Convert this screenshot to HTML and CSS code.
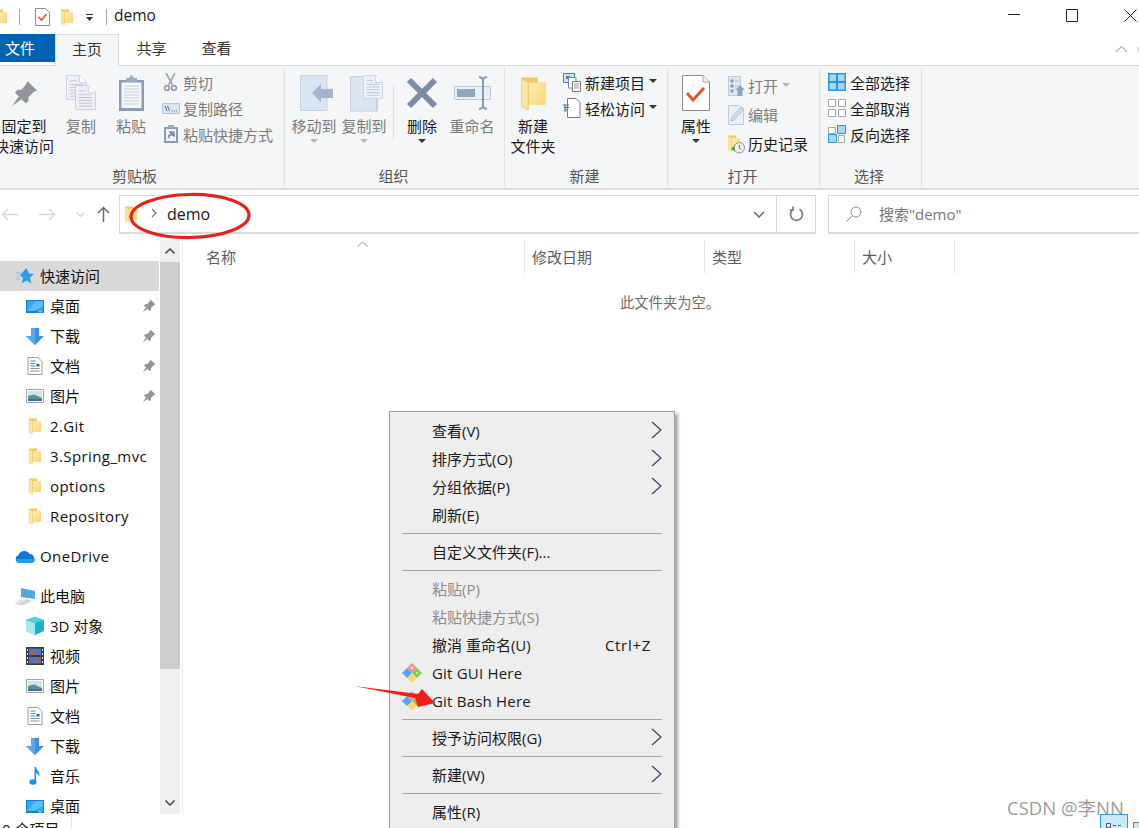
FILE: index.html
```html
<!DOCTYPE html>
<html lang="zh-CN">
<head>
    <meta charset="UTF-8">
    <title>demo</title>
    <link rel="stylesheet" href="styles.css">
</head>
<body>
<svg class="sprite" xmlns="http://www.w3.org/2000/svg">
    <defs>
        <linearGradient id="folderFront" x1="0" y1="0" x2="1" y2="1">
            <stop offset="0" stop-color="#fdeeb8"/>
            <stop offset="1" stop-color="#fbd56f"/>
        </linearGradient>
        <symbol id="folder" viewBox="0 0 12 16">
            <path d="M0 0.5H8V3H12V13.5H0Z" fill="#f3c95f"/>
            <path d="M3.5 3H12V13.5H3.5Z" fill="url(#folderFront)"/>
            <path d="M0 1L3.5 3V16L0 14.5Z" fill="#fbe6a4" stroke="#e8c063" stroke-width=".4"/>
        </symbol>
        <symbol id="pin" viewBox="0 0 14 14">
            <path d="M8.5 .5L13.5 5.5L12 6L9 9V11L7.5 12L2 6.5L3.5 5H5.5L8 2Z" fill="#8f969c"/>
            <path d="M4 8.5L.5 13.5L5.5 10Z" fill="#8f969c"/>
        </symbol>
        <symbol id="desktop" viewBox="0 0 18 13">
            <path d="M0 0H18V13H0Z" fill="#0f7fd8"/>
            <path d="M1 1H17V11H1Z" fill="#36a6f2"/>
            <path d="M1 11L10 1H17V6L8 11Z" fill="#5cbcf8"/>
            <path d="M12 11.5H16V12.2H12Z" fill="#fff"/>
        </symbol>
        <symbol id="download" viewBox="0 0 18 17">
            <path d="M5 0H13V8H18L9 17L0 8H5Z" fill="#3d8fe0"/>
            <path d="M5 0H9V17L0 8H5Z" fill="#5aa7ec"/>
        </symbol>
        <symbol id="document" viewBox="0 0 15 18">
            <path d="M.5 .5H10.5L14.5 4.5V17.5H.5Z" fill="#fff" stroke="#9a9a9a"/>
            <path d="M3 4H8M3 6.5H8M3 9H8" stroke="#2e8ee0" stroke-width="1.2"/>
            <path d="M3 11.5H12M3 14H12" stroke="#8f8f8f"/>
            <path d="M9 7H12V9.5H9Z" fill="#2f6a8c"/>
        </symbol>
        <symbol id="picture" viewBox="0 0 18 14">
            <path d="M.5 .5H17.5V13.5H.5Z" fill="#fff" stroke="#a5a5a5"/>
            <path d="M2 2H16V12H2Z" fill="#cfe4ee"/>
            <path d="M2 7L8 5.5L16 9V12H2Z" fill="#5f8f8a"/>
            <path d="M2 10H16V12H2Z" fill="#2f75b5"/>
        </symbol>
        <symbol id="gitlogo" viewBox="0 0 20 20">
            <path d="M10 0L15 5L10 10L5 5Z" fill="#f78f8f"/>
            <path d="M8.5 3.5H11.5V6H8.5Z" fill="#fff" opacity=".5"/>
            <path d="M15 5L20 10L15 15L10 10Z" fill="#7fcf55"/>
            <path d="M14 9H16V11H14Z" fill="#fff" opacity=".5"/>
            <path d="M10 10L15 15L10 20L5 15Z" fill="#f9da72"/>
            <path d="M5 5L10 10L5 15L0 10Z" fill="#5aa2f2"/>
        </symbol>
        <symbol id="chevron" viewBox="0 0 11 18">
            <path d="M1 1L10 9L1 17" fill="none" stroke="#39415a" stroke-width="1.2"/>
        </symbol>
        <symbol id="page" viewBox="0 0 22 26">
            <path d="M.5 .5H14L21.5 8V25.5H.5Z" fill="#eef2f8" stroke="#c3d0e4"/>
            <path d="M14 .5V8H21.5" fill="#fff" stroke="#c3d0e4"/>
            <path d="M4 6H11M4 10H18M4 13H18M4 16H18M4 19H18M4 22H18" stroke="#b9c4d6"/>
        </symbol>
    </defs>
</svg>

<div class="window">
    <div class="titlebar">
        <svg class="qa-folder-cut" width="12" height="16"><use href="#folder"/></svg>
        <span class="qa-sep qa-sep-first"></span>
        <svg class="qa-props" width="15" height="18" viewBox="0 0 15 18">
            <path d="M.5 .5H10.5L14.5 4.5V17.5H.5Z" fill="#fff" stroke="#8c8c8c"/>
            <path d="M3.5 9L6.5 12L11.5 6" fill="none" stroke="#e2562a" stroke-width="1.6"/>
        </svg>
        <svg class="qa-folder" width="12" height="16"><use href="#folder"/></svg>
        <svg class="qa-drop" width="9" height="8" viewBox="0 0 9 8">
            <path d="M1 .5H8" stroke="#333"/>
            <path d="M1 3H8L4.5 7Z" fill="#333"/>
        </svg>
        <span class="qa-sep qa-sep-second"></span>
        <span class="title-text">demo</span>
        <div class="win-buttons">
            <svg width="12" height="12" viewBox="0 0 12 12"><path d="M0 5.5H12" stroke="#222"/></svg>
            <svg width="12" height="13" viewBox="0 0 12 13"><path d="M.5 .5H11.5V12.5H.5Z" fill="none" stroke="#222"/></svg>
            <svg width="13" height="13" viewBox="0 0 13 13"><path d="M.5 .5L12.5 12.5M12.5 .5L.5 12.5" stroke="#222"/></svg>
        </div>
    </div>

    <div class="tabs">
        <div class="tab tab-file">文件</div>
        <div class="tab tab-active">主页</div>
        <div class="tab tab-share">共享</div>
        <div class="tab tab-view">查看</div>
        <div class="ribbon-tools">
            <svg width="13" height="8" viewBox="0 0 13 8"><path d="M1 7L6.5 1.5L12 7" fill="none" stroke="#b5b5b5" stroke-width="1.2"/></svg>
            <svg width="14" height="14" viewBox="0 0 14 14"><circle cx="7" cy="7" r="6.5" fill="#0a6cc4"/></svg>
        </div>
    </div>

    <div class="ribbon">
        <section class="group group-clipboard">
            <div class="group-body">
                <div class="big-btn btn-pin">
                    <div class="big-icon"><svg width="27" height="27"><use href="#pin"/></svg></div>
                    <div class="btn-label">固定到<br>快速访问</div>
                </div>
                <div class="big-btn btn-copy muted">
                    <div class="big-icon">
                        <svg width="31" height="36" viewBox="0 0 31 36">
                            <use href="#page" x="0" y="0" width="21" height="25"/>
                            <use href="#page" x="9" y="10" width="21" height="25"/>
                        </svg>
                    </div>
                    <div class="btn-label">复制</div>
                </div>
                <div class="big-btn btn-paste muted">
                    <div class="big-icon">
                        <svg width="27" height="37" viewBox="0 0 27 37">
                            <path d="M1 5H26V36H1Z" fill="#8a9cb8"/>
                            <path d="M3.5 7.5H23.5V33H3.5Z" fill="#f4f7fb"/>
                            <path d="M6 11H21M6 14H21M6 17H21M6 20H21M6 23H21M6 26H21M6 29H21" stroke="#c3cfe0"/>
                            <path d="M8 3H11L13.5 0L16 3H19V7H8Z" fill="#9aabc4"/>
                        </svg>
                    </div>
                    <div class="btn-label">粘贴</div>
                </div>
                <div class="small-col small-col-clip muted">
                    <div class="small-btn">
                        <span class="slot">
                            <svg width="13" height="19" viewBox="0 0 13 19">
                                <path d="M2 0L8.5 12M11 0L4.5 12" stroke="#98a6ba" stroke-width="1.6"/>
                                <circle cx="3" cy="15" r="2.4" fill="none" stroke="#7e8da6" stroke-width="1.4"/>
                                <circle cx="10" cy="15" r="2.4" fill="none" stroke="#7e8da6" stroke-width="1.4"/>
                            </svg>
                        </span>
                        <span>剪切</span>
                    </div>
                    <div class="small-btn">
                        <span class="slot">
                            <svg width="18" height="11" viewBox="0 0 18 11">
                                <path d="M.5 .5H17.5V10.5H.5Z" fill="#dbe4f1" stroke="#b6c4d8"/>
                                <path d="M3 3L5 8M5.5 3L7.5 8" stroke="#5a6b85"/>
                                <path d="M10 8H11M12 8H13M14 8H15" stroke="#5a6b85"/>
                            </svg>
                        </span>
                        <span>复制路径</span>
                    </div>
                    <div class="small-btn">
                        <span class="slot">
                            <svg width="14" height="18" viewBox="0 0 14 18">
                                <path d="M0 2H14V18H0Z" fill="#8a9cb8"/>
                                <path d="M2 4H12V16H2Z" fill="#f0f3f8"/>
                                <path d="M4 0H10V3H4Z" fill="#9aabc4"/>
                                <path d="M5 13V10H8M6 7H10V11Z" fill="none" stroke="#54688a" stroke-width="1.2"/>
                            </svg>
                        </span>
                        <span>粘贴快捷方式</span>
                    </div>
                </div>
            </div>
            <div class="group-label">剪贴板</div>
        </section>

        <section class="group group-organize">
            <div class="group-body">
                <div class="big-btn btn-50 muted">
                    <div class="big-icon icon-nudge">
                        <svg width="33" height="36" viewBox="0 0 33 36">
                            <path d="M.5 .5H27V35.5H.5Z" fill="#dbe4f1" stroke="#c6d2e4"/>
                            <path d="M12 18L21 9V14H33V23H21V27Z" fill="#a3b4cc"/>
                        </svg>
                    </div>
                    <div class="btn-label">移动到<i class="caret caret-light"></i></div>
                </div>
                <div class="big-btn btn-50 muted">
                    <div class="big-icon icon-nudge">
                        <svg width="33" height="37" viewBox="0 0 33 37">
                            <path d="M.5 1.5H27V36H.5Z" fill="#dbe4f1" stroke="#c6d2e4"/>
                            <use href="#page" x="13" y="0" width="20" height="24"/>
                            <path d="M27 24V36" stroke="#b9c7da"/>
                        </svg>
                    </div>
                    <div class="btn-label">复制到<i class="caret caret-light"></i></div>
                </div>
                <div class="group-divider"></div>
                <div class="big-btn btn-50">
                    <div class="big-icon">
                        <svg width="32" height="32" viewBox="0 0 32 32">
                            <path d="M3 3L29 29M29 3L3 29" stroke="#7d8ba4" stroke-width="6"/>
                        </svg>
                    </div>
                    <div class="btn-label">删除<i class="caret"></i></div>
                </div>
                <div class="big-btn btn-50 muted">
                    <div class="big-icon">
                        <svg width="37" height="34" viewBox="0 0 37 34">
                            <path d="M.5 10.5H36.5V23.5H.5Z" fill="#eaf0f7" stroke="#b9c7da"/>
                            <path d="M3 13H21V21H3Z" fill="#93a6c0"/>
                            <path d="M25 1C27 1 28 2 29 3C30 2 31 1 33 1M29 3V31M25 33C27 33 28 32 29 31C30 32 31 33 33 33" fill="none" stroke="#8b9cb6" stroke-width="2"/>
                        </svg>
                    </div>
                    <div class="btn-label">重命名</div>
                </div>
            </div>
            <div class="group-label">组织</div>
        </section>

        <section class="group group-new">
            <div class="group-body">
                <div class="big-btn btn-folder">
                    <div class="big-icon"><svg width="25" height="34"><use href="#folder"/></svg></div>
                    <div class="btn-label">新建<br>文件夹</div>
                </div>
                <div class="small-col small-col-new">
                    <div class="small-btn">
                        <svg width="18" height="19" viewBox="0 0 18 19">
                            <path d="M.5 .5H11.5V9.5H.5Z" fill="#cfe3f6" stroke="#3e87c7"/>
                            <path d="M3 3H7V6H3Z" fill="#3e87c7"/>
                            <path d="M5.5 4.5H13V15H5.5Z" fill="#fff" stroke="#888"/>
                            <path d="M9.5 8.5H17.5V18.5H9.5Z" fill="#fff" stroke="#777"/>
                            <path d="M11 11H16M11 13H16M11 15H16" stroke="#999"/>
                        </svg>
                        <span>新建项目</span><i class="caret caret-side"></i>
                    </div>
                    <div class="small-btn">
                        <svg width="18" height="20" viewBox="0 0 18 20">
                            <path d="M4.5 .5H13L17 4.5V19.5H4.5Z" fill="#fff" stroke="#7d7d7d"/>
                            <path d="M0 7H6M1 9.5H6M2 12H4M2 7V14" stroke="#2e6fb0"/>
                        </svg>
                        <span>轻松访问</span><i class="caret caret-side"></i>
                    </div>
                </div>
            </div>
            <div class="group-label">新建</div>
        </section>

        <section class="group group-open">
            <div class="group-body">
                <div class="big-btn btn-props">
                    <div class="big-icon">
                        <svg width="28" height="36" viewBox="0 0 28 36">
                            <path d="M.5 .5H21L27.5 7V35.5H.5Z" fill="#fff" stroke="#8c8c8c"/>
                            <path d="M21 .5V7H27.5" fill="#eee" stroke="#aaa"/>
                            <path d="M5 18L11 25L22 13" fill="none" stroke="#e2562a" stroke-width="3"/>
                        </svg>
                    </div>
                    <div class="btn-label">属性<i class="caret"></i></div>
                </div>
                <div class="small-col small-col-open">
                    <div class="small-btn muted">
                        <svg width="17" height="20" viewBox="0 0 17 20">
                            <path d="M.5 .5H12.5V19.5H.5Z" fill="#dfe7f2" stroke="#bccadd"/>
                            <path d="M2.5 3.5H5.5V6.5H2.5ZM2.5 8.5H5.5V11.5H2.5ZM2.5 13.5H5.5V16.5H2.5Z" fill="#8a9ab2"/>
                            <path d="M7 5H11M7 10H10" stroke="#b2bfd2"/>
                            <path d="M12 9L17 14H14.5V20H9.5V14H7Z" fill="#8ea6c6"/>
                        </svg>
                        <span>打开</span><i class="caret caret-side caret-light"></i>
                    </div>
                    <div class="small-btn muted">
                        <svg width="17" height="20" viewBox="0 0 17 20">
                            <path d="M.5 .5H11L15.5 5V19.5H.5Z" fill="#eaf0f7" stroke="#bccadd"/>
                            <path d="M3 16L4 12L13 2L16 4L6 15Z" fill="#cfdcec" stroke="#a5b6cd" stroke-width=".8"/>
                        </svg>
                        <span>编辑</span>
                    </div>
                    <div class="small-btn">
                        <svg width="17" height="20" viewBox="0 0 18 20">
                            <use href="#folder" x="0" y="0" width="13" height="18"/>
                            <circle cx="12" cy="14" r="5.5" fill="#f2f2f2" stroke="#888"/>
                            <path d="M12 11V14L14 16" fill="none" stroke="#555"/>
                            <path d="M3 15L7 12V18Z" fill="#3aa63a"/>
                        </svg>
                        <span>历史记录</span>
                    </div>
                </div>
            </div>
            <div class="group-label">打开</div>
        </section>

        <section class="group group-select">
            <div class="group-body">
                <div class="small-col small-col-select">
                    <div class="small-btn">
                        <svg width="18" height="18" viewBox="0 0 18 18">
                            <path d="M0 0H18V18H0Z" fill="#2f94e0"/>
                            <path d="M1.5 1.5H8V8H1.5ZM10 1.5H16.5V8H10ZM1.5 10H8V16.5H1.5ZM10 10H16.5V16.5H10Z" fill="#a8d4f5"/>
                        </svg>
                        <span>全部选择</span>
                    </div>
                    <div class="small-btn">
                        <svg width="18" height="18" viewBox="0 0 18 18">
                            <path d="M.5 .5H7.5V7.5H.5ZM10.5 .5H17.5V7.5H10.5ZM.5 10.5H7.5V17.5H.5ZM10.5 10.5H17.5V17.5H10.5Z" fill="#fff" stroke="#a8a8a8"/>
                        </svg>
                        <span>全部取消</span>
                    </div>
                    <div class="small-btn">
                        <svg width="18" height="18" viewBox="0 0 18 18">
                            <path d="M.5 2.5H7.5V8.5H.5ZM10.5 10.5H16.5V17.5H10.5Z" fill="#fff" stroke="#a8a8a8"/>
                            <path d="M9.5 .5H17.5V8.5H9.5ZM.5 9.5H8.5V17.5H.5Z" fill="#a8d4f5" stroke="#2f94e0"/>
                        </svg>
                        <span>反向选择</span>
                    </div>
                </div>
            </div>
            <div class="group-label">选择</div>
        </section>
    </div>

    <div class="navbar">
        <div class="nav-arrows">
            <svg width="17" height="13" viewBox="0 0 17 13"><path d="M17 6.5H1.5M7 1L1.5 6.5L7 12" fill="none" stroke="#d8d8d8" stroke-width="1.5"/></svg>
            <svg width="17" height="13" viewBox="0 0 17 13"><path d="M0 6.5H15.5M10 1L15.5 6.5L10 12" fill="none" stroke="#d8d8d8" stroke-width="1.5"/></svg>
            <svg width="9" height="6" viewBox="0 0 9 6"><path d="M.5 .5L4.5 4.5L8.5 .5" fill="none" stroke="#d8d8d8" stroke-width="1.3"/></svg>
            <svg width="13" height="16" viewBox="0 0 13 16"><path d="M6.5 16V1.5M1 7L6.5 1.5L12 7" fill="none" stroke="#6b6b6b" stroke-width="1.5"/></svg>
        </div>
        <div class="address">
            <svg class="address-folder" width="12" height="16"><use href="#folder"/></svg>
            <svg class="address-sep" width="6" height="10" viewBox="0 0 6 10"><path d="M1 1L5 5L1 9" fill="none" stroke="#777" stroke-width="1.3"/></svg>
            <span class="address-text">demo</span>
            <svg class="address-drop" width="12" height="7" viewBox="0 0 12 7"><path d="M1 1L6 6L11 1" fill="none" stroke="#666" stroke-width="1.5"/></svg>
            <div class="address-refresh">
                <svg width="15" height="16" viewBox="0 0 15 16"><path d="M10.5 3.2A6 6 0 1 1 4.5 3.2M4 .5V4H.8" fill="none" stroke="#777" stroke-width="1.7"/></svg>
            </div>
        </div>
        <div class="search">
            <svg width="16" height="16" viewBox="0 0 16 16"><circle cx="10" cy="6" r="5" fill="none" stroke="#888"/><path d="M6.5 9.5L.5 15.5" stroke="#888"/></svg>
            <span>搜索"demo"</span>
        </div>
    </div>

    <div class="main">
        <aside class="sidebar">
            <div class="tree">
                <div class="row row-top row-selected">
                    <svg class="row-icon" width="18" height="17" viewBox="0 0 18 17">
                        <path d="M10.5 0L12.8 5.4L18 6L14 9.8L15.2 15.5L10.5 12.6L5.8 15.5L7 9.8L4 7Z" fill="#2f9be8"/>
                        <path d="M0 5H5M1 8H5M0 11H4" stroke="#7dbdee"/>
                    </svg>
                    <span>快速访问</span>
                </div>
                <div class="row"><svg class="row-icon" width="18" height="13"><use href="#desktop"/></svg><span>桌面</span><svg class="row-pin" width="14" height="14"><use href="#pin"/></svg></div>
                <div class="row"><svg class="row-icon" width="18" height="17"><use href="#download"/></svg><span>下载</span><svg class="row-pin" width="14" height="14"><use href="#pin"/></svg></div>
                <div class="row"><svg class="row-icon" width="18" height="18"><use href="#document"/></svg><span>文档</span><svg class="row-pin" width="14" height="14"><use href="#pin"/></svg></div>
                <div class="row"><svg class="row-icon" width="18" height="14"><use href="#picture"/></svg><span>图片</span><svg class="row-pin" width="14" height="14"><use href="#pin"/></svg></div>
                <div class="row"><svg class="row-icon" width="18" height="16"><use href="#folder"/></svg><span class="en">2.Git</span></div>
                <div class="row"><svg class="row-icon" width="18" height="16"><use href="#folder"/></svg><span class="en">3.Spring_mvc</span></div>
                <div class="row"><svg class="row-icon" width="18" height="16"><use href="#folder"/></svg><span class="en">options</span></div>
                <div class="row"><svg class="row-icon" width="18" height="16"><use href="#folder"/></svg><span class="en">Repository</span></div>

                <div class="row row-top row-spaced">
                    <svg class="row-icon row-icon-wide" width="20" height="13" viewBox="0 0 20 13">
                        <path d="M4.5 13A4 4 0 0 1 3.5 5.2A6 6 0 0 1 14.5 4A4.6 4.6 0 0 1 16 13Z" fill="#0f78d4"/>
                        <path d="M4.5 13A4 4 0 0 1 1 9H20A4 4 0 0 1 16 13Z" fill="#2a9be6"/>
                    </svg>
                    <span class="en">OneDrive</span>
                </div>
                <div class="row row-top row-spaced">
                    <svg class="row-icon row-icon-wide" width="20" height="17" viewBox="0 0 20 17">
                        <path d="M6 0L20 3V11L6 9Z" fill="#58a6e0"/>
                        <path d="M5 14L12 11L17 13L9 17H2Z" fill="#d5d5d5"/>
                        <path d="M0 15L5 12L8 13L3 16Z" fill="#eee" stroke="#ccc" stroke-width=".5"/>
                    </svg>
                    <span>此电脑</span>
                </div>
                <div class="row">
                    <svg class="row-icon" width="18" height="18" viewBox="0 0 18 18">
                        <path d="M9 0L18 3V14L9 18L0 14V3Z" fill="#19b3cc"/>
                        <path d="M0 3L9 6V18L0 14Z" fill="#a5e8ee"/>
                        <path d="M9 0L18 3L9 6L0 3Z" fill="#54d2de"/>
                    </svg>
                    <span>3D 对象</span>
                </div>
                <div class="row">
                    <svg class="row-icon" width="18" height="18" viewBox="0 0 18 18">
                        <path d="M0 0H18V18H0Z" fill="#3a3a3a"/>
                        <path d="M3 1.5H15V8H3Z" fill="#4a78c0"/>
                        <path d="M3 10H15V16.5H3Z" fill="#4a78c0"/>
                        <path d="M5 4H9V8H5ZM9 12H13V16H9Z" fill="#c45b3c"/>
                        <path d="M1 2H2V4H1ZM1 6H2V8H1ZM1 10H2V12H1ZM1 14H2V16H1ZM16 2H17V4H16ZM16 6H17V8H16ZM16 10H17V12H16ZM16 14H17V16H16Z" fill="#ddd"/>
                    </svg>
                    <span>视频</span>
                </div>
                <div class="row"><svg class="row-icon" width="18" height="14"><use href="#picture"/></svg><span>图片</span></div>
                <div class="row"><svg class="row-icon" width="18" height="18"><use href="#document"/></svg><span>文档</span></div>
                <div class="row"><svg class="row-icon" width="18" height="17"><use href="#download"/></svg><span>下载</span></div>
                <div class="row">
                    <svg class="row-icon" width="18" height="18" viewBox="0 0 18 18">
                        <ellipse cx="7" cy="15" rx="3.6" ry="2.8" fill="#1c8fe6"/>
                        <path d="M8.5 0H10C10.5 4 15 5 13 10C12.5 7.5 11.5 6.5 10 6V15H8.5Z" fill="#1c8fe6"/>
                    </svg>
                    <span>音乐</span>
                </div>
                <div class="row"><svg class="row-icon" width="18" height="13"><use href="#desktop"/></svg><span>桌面</span></div>
            </div>
            <div class="scrollbar">
                <div class="scroll-btn">
                    <svg width="10" height="6" viewBox="0 0 10 6"><path d="M.5 5.5L5 1L9.5 5.5" fill="none" stroke="#555" stroke-width="1.6"/></svg>
                </div>
                <div class="scroll-thumb"></div>
                <div class="scroll-rest"></div>
                <div class="scroll-btn">
                    <svg width="10" height="6" viewBox="0 0 10 6"><path d="M.5 .5L5 5L9.5 .5" fill="none" stroke="#555" stroke-width="1.6"/></svg>
                </div>
            </div>
        </aside>

        <div class="content">
            <div class="col-header">
                <div class="col col-name">名称
                    <svg class="sort-caret" width="11" height="6" viewBox="0 0 11 6"><path d="M.5 5.5L5.5 1L10.5 5.5" fill="none" stroke="#999"/></svg>
                </div>
                <div class="col col-date">修改日期</div>
                <div class="col col-type">类型</div>
                <div class="col col-size">大小</div>
            </div>
            <div class="empty">此文件夹为空。</div>
        </div>
    </div>

    <div class="statusbar">
        <span class="status-count">0 个项目</span>
        <div class="view-buttons">
            <div class="view-btn view-btn-on">
                <svg width="16" height="8" viewBox="0 0 16 8"><path d="M.5 1.5H4.5V5.5H.5Z" fill="#fff" stroke="#555"/><path d="M7 3.5H10M12 3.5H15" stroke="#555"/></svg>
            </div>
            <svg class="view-thumb" width="12" height="8" viewBox="0 0 12 8"><path d="M.5 .5H11.5V7.5H.5Z" fill="#cfe3f6" stroke="#777"/></svg>
        </div>
    </div>

    <ul class="context-menu">
        <li class="menu-item">查看(V)<svg class="menu-arrow" width="11" height="18"><use href="#chevron"/></svg></li>
        <li class="menu-item">排序方式(O)<svg class="menu-arrow" width="11" height="18"><use href="#chevron"/></svg></li>
        <li class="menu-item">分组依据(P)<svg class="menu-arrow" width="11" height="18"><use href="#chevron"/></svg></li>
        <li class="menu-item">刷新(E)</li>
        <li class="menu-sep"></li>
        <li class="menu-item">自定义文件夹(F)...</li>
        <li class="menu-sep"></li>
        <li class="menu-item disabled">粘贴(P)</li>
        <li class="menu-item disabled">粘贴快捷方式(S)</li>
        <li class="menu-item">撤消 重命名(U)<span class="menu-key">Ctrl+Z</span></li>
        <li class="menu-item menu-en"><svg class="menu-icon" width="20" height="20"><use href="#gitlogo"/></svg>Git GUI Here</li>
        <li class="menu-item menu-en"><svg class="menu-icon" width="20" height="20"><use href="#gitlogo"/></svg>Git Bash Here</li>
        <li class="menu-sep"></li>
        <li class="menu-item">授予访问权限(G)<svg class="menu-arrow" width="11" height="18"><use href="#chevron"/></svg></li>
        <li class="menu-sep"></li>
        <li class="menu-item">新建(W)<svg class="menu-arrow" width="11" height="18"><use href="#chevron"/></svg></li>
        <li class="menu-sep"></li>
        <li class="menu-item">属性(R)</li>
    </ul>

    <svg class="mark-ellipse" width="130" height="52" viewBox="0 0 130 52">
        <ellipse cx="65" cy="26" rx="59" ry="21.5" fill="none" stroke="#e8201c" stroke-width="3.2" transform="rotate(-1 65 26)"/>
    </svg>
    <svg class="mark-arrow" width="84" height="24" viewBox="0 0 84 24">
        <path d="M0 3L64 11L68 6L81 20L64 24L61 15Z" fill="#f01f1a"/>
    </svg>
    <div class="watermark">CSDN @李NN</div>
</div>
</body>
</html>
```

FILE: styles.css
```css
* {
    margin: 0;
    padding: 0;
    box-sizing: border-box;
}

body {
    font-family: "Open Sans", "Noto Sans CJK SC", sans-serif;
    font-size: 15px;
    color: #1a1a1a;
    background: #fff;
    overflow: hidden;
}

.sprite {
    position: absolute;
    width: 0;
    height: 0;
}

svg {
    display: block;
    flex: none;
}

.window {
    position: relative;
    width: 1139px;
    height: 828px;
    overflow: hidden;
    display: flex;
    flex-direction: column;
}

/* title bar */
.titlebar {
    height: 34px;
    flex: none;
    display: flex;
    align-items: center;
}

.qa-folder-cut {
    margin-left: -5px;
}

.qa-sep {
    width: 1px;
    height: 16px;
    background: #a8a8a8;
}

.qa-sep-first {
    margin-left: 12px;
}

.qa-props {
    margin-left: 15px;
}

.qa-folder {
    margin-left: 11px;
}

.qa-drop {
    margin-left: 12px;
    margin-top: 2px;
}

.qa-sep-second {
    margin-left: 12px;
}

.title-text {
    margin-left: 7px;
    font-size: 15.5px;
    margin-top: -4px;
}

.win-buttons {
    margin-left: auto;
    display: flex;
    align-items: center;
    gap: 46px;
    margin-right: 2px;
    margin-top: -4px;
}

/* tabs */
.tabs {
    height: 32px;
    flex: none;
    display: flex;
    border-bottom: 1px solid #dadbdc;
}

.tab {
    height: 28px;
    line-height: 28px;
    text-align: center;
    color: #333;
}

.tab-file {
    width: 55px;
    background: #0063b1;
    color: #fff;
    text-align: right;
    padding-right: 20px;
}

.tab-active {
    width: 64px;
    height: 32px;
    line-height: 29px;
    background: #f5f6f7;
    border: 1px solid #dadbdc;
    border-bottom: none;
}

.tab-share {
    width: 62px;
    margin-left: 1px;
    padding-left: 1px;
}

.tab-view {
    width: 69px;
}

.ribbon-tools {
    margin-left: auto;
    width: 24px;
    display: flex;
    align-items: center;
    gap: 10px;
    overflow: hidden;
    height: 30px;
}

/* ribbon */
.ribbon {
    height: 124px;
    flex: none;
    display: flex;
    background: #f5f6f7;
    border-bottom: 2px solid #dadbdc;
}

.group {
    display: flex;
    flex-direction: column;
    margin-top: 2px;
    height: 119px;
    border-right: 1px solid #e1e2e4;
}

.group-clipboard {
    width: 285px;
}

.group-organize {
    width: 220px;
}

.group-new {
    width: 163px;
}

.group-open {
    width: 152px;
}

.group-select {
    width: 102px;
}

.group-body {
    flex: none;
    height: 96px;
    display: flex;
    align-items: flex-start;
    padding: 2px 0 0 4px;
}

.group-clipboard .group-body {
    padding-left: 0;
}

.group-select .group-body {
    padding-left: 8px;
}

.group-label {
    height: 20px;
    line-height: 20px;
    margin-top: 2px;
    text-align: center;
    color: #555;
}

.group-clipboard .group-label {
    padding-right: 15px;
}

.group-organize .group-label {
    padding-right: 2px;
}

.group-new .group-label {
    padding-right: 3px;
}

.group-open .group-label {
    padding-right: 2px;
}

.group-select .group-label {
    padding-right: 3px;
}

.group-divider {
    width: 1px;
    height: 55px;
    margin: 15px 3px 0 4px;
    background: #dfe0e2;
}

.big-btn {
    flex: none;
    display: flex;
    flex-direction: column;
    align-items: center;
    text-align: center;
}

.big-icon {
    height: 46px;
    display: flex;
    align-items: center;
    justify-content: center;
}

.icon-nudge {
    padding-left: 5px;
}

.btn-label {
    line-height: 20px;
    white-space: nowrap;
}

.muted {
    color: #7b7b7b;
}

.btn-pin {
    width: 60px;
    margin-left: -6px;
}

.btn-copy {
    width: 54px;
}

.btn-paste {
    width: 46px;
}

.btn-50 {
    width: 50px;
}

.btn-folder {
    width: 48px;
}

.btn-props {
    width: 48px;
}

.caret {
    display: block;
    width: 0;
    height: 0;
    margin: 3px auto 0;
    border-left: 4px solid transparent;
    border-right: 4px solid transparent;
    border-top: 4px solid #333;
}

.caret-light {
    border-top-color: #b5b5b5;
}

.caret-side {
    display: inline-block;
    margin: 0 0 2px 4px;
}

.small-col {
    display: flex;
    flex-direction: column;
    margin-top: -1px;
}

.small-col-clip {
    margin-left: 6px;
}

.small-col-new {
    margin-left: 6px;
}

.small-col-open {
    margin-left: 8px;
    margin-top: 1px;
}

.small-btn {
    height: 26px;
    display: flex;
    align-items: center;
    white-space: nowrap;
}

.small-btn svg {
    margin-right: 4px;
}

.small-col-open .small-btn svg {
    margin-right: 3px;
}

.small-col-clip .small-btn svg {
    margin-right: 0;
}

.slot {
    width: 23px;
    display: flex;
    justify-content: center;
    padding-right: 2px;
}

.small-col-open .small-btn {
    height: 29px;
}

/* address row */
.navbar {
    height: 50px;
    flex: none;
    display: flex;
    align-items: flex-start;
    padding-top: 5px;
}

.nav-arrows {
    width: 119px;
    height: 38px;
    display: flex;
    align-items: center;
    padding-left: 1px;
    gap: 21px;
}

.nav-arrows svg:nth-child(3) {
    margin-left: -1px;
    margin-top: 2px;
}

.nav-arrows svg:nth-child(4) {
    margin-left: -9px;
}

.address {
    width: 697px;
    height: 39px;
    display: flex;
    align-items: center;
    border: 2px solid #dadada;
    border-width: 1px 1px 2px 1px;
    padding-left: 5px;
}

.address-folder {
    width: 12px;
}

.address-sep {
    margin-left: 14px;
    margin-top: -3px;
}

.address-text {
    margin-left: 10px;
    font-size: 16px;
    margin-top: -1px;
}

.address-drop {
    margin-left: auto;
    margin-right: 11px;
}

.address-refresh {
    width: 39px;
    height: 100%;
    display: flex;
    align-items: center;
    justify-content: center;
    border-left: 1px solid #dadada;
}

.search {
    margin-left: 12px;
    flex: 1;
    height: 39px;
    display: flex;
    align-items: center;
    gap: 17px;
    padding-left: 17px;
    border: 2px solid #dadada;
    border-width: 1px 0 2px 1px;
    color: #777;
}

.search span {
    margin-top: -2px;
}

/* main area */
.main {
    flex: 1;
    min-height: 0;
    display: flex;
}

.sidebar {
    width: 183px;
    flex: none;
    display: flex;
    border-right: 1px solid #f0f0f0;
}

.tree {
    width: 160px;
    padding-top: 21px;
    overflow: hidden;
}

.row {
    height: 30px;
    display: flex;
    align-items: center;
    padding-left: 26px;
    position: relative;
    color: #111;
    white-space: nowrap;
}

.row span {
    margin-top: -2px;
}

.row .en {
    margin-top: 0;
    letter-spacing: 0.4px;
}

.row-top {
    padding-left: 16px;
}

.row-selected {
    background: #d9d9d9;
    width: 159px;
}

.row-spaced {
    margin-top: 10px;
}

.row-icon {
    width: 18px;
    margin-right: 6px;
}

.row-icon-wide {
    width: 20px;
    margin: 0 5px 0 -1px;
}

.row-pin {
    position: absolute;
    left: 142px;
    top: 8px;
}

.scrollbar {
    width: 20px;
    display: flex;
    flex-direction: column;
    background: #f0f0f0;
}

.scroll-btn {
    height: 22px;
    flex: none;
    display: flex;
    align-items: center;
    justify-content: center;
}

.scroll-thumb {
    height: 407px;
    flex: none;
    background: #cdcdcd;
}

.scroll-rest {
    flex: 1;
}

.content {
    flex: 1;
    min-width: 0;
}

.col-header {
    height: 33px;
    display: flex;
    color: #5c5c5c;
}

.col {
    height: 33px;
    line-height: 34px;
    padding-left: 7px;
    border-right: 1px solid #e5e5e5;
    position: relative;
}

.col-name {
    width: 342px;
    padding-left: 23px;
}

.col-date {
    width: 180px;
}

.col-type {
    width: 150px;
}

.col-size {
    width: 100px;
}

.sort-caret {
    position: absolute;
    left: 174px;
    top: 1px;
}

.empty {
    margin: 20px 0 0 437px;
    line-height: 20px;
    font-size: 14.3px;
    color: #6d6d6d;
}

/* status */
.statusbar {
    height: 14px;
    flex: none;
    display: flex;
}

.status-count {
    padding: 4px 0 0 2px;
    width: 72px;
    height: 30px;
    border-right: 1px solid #e5e5e5;
    white-space: nowrap;
}

.view-buttons {
    margin-left: auto;
    display: flex;
    align-items: flex-start;
}

.view-btn {
    width: 28px;
    height: 20px;
    padding: 7px 0 0 5px;
    background: #cce8ff;
    border: 1px solid #26a0da;
}

.view-thumb {
    margin: 8px -6px 0 5px;
}

/* context menu */
.context-menu {
    position: absolute;
    left: 389px;
    top: 411px;
    width: 286px;
    height: 440px;
    padding-top: 5px;
    list-style: none;
    background: #eeeeee;
    border: 1px solid #a0a0a0;
    box-shadow: 3px 3px 3px rgba(0, 0, 0, 0.35);
}

.menu-item {
    height: 28px;
    line-height: 28px;
    padding: 0 12px 0 42px;
    display: flex;
    align-items: center;
    justify-content: space-between;
    position: relative;
    color: #1a1a1a;
}

.menu-en {
    letter-spacing: 0.2px;
}

.menu-item.disabled {
    color: #8c8c8c;
}

.menu-sep {
    height: 1px;
    margin: 4px 12px;
    background: #a6a6a6;
}

.menu-arrow {
    margin-top: -2px;
}

.menu-key {
    margin-right: 11px;
    letter-spacing: 0.7px;
}

.menu-icon {
    position: absolute;
    left: 12px;
    top: 4px;
}

/* annotations drawn on top of the screenshot */
.mark-ellipse {
    position: absolute;
    left: 125px;
    top: 190px;
}

.mark-arrow {
    position: absolute;
    left: 354px;
    top: 683px;
}

.watermark {
    position: absolute;
    left: 1007px;
    top: 796px;
    font-size: 18.5px;
    line-height: 24px;
    color: rgba(120, 120, 120, 0.75);
    white-space: nowrap;
}
```
